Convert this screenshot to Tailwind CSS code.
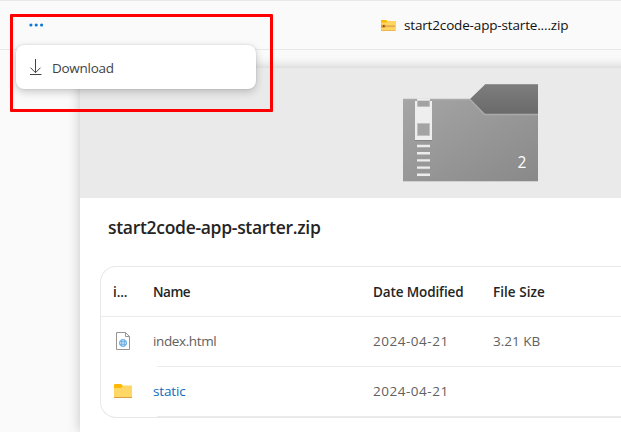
<!DOCTYPE html>
<html lang="en">
<head>
<meta charset="utf-8">
<title>start2code-app-starter.zip</title>
<script src="https://cdn.jsdelivr.net/npm/@tailwindcss/browser@4"></script>
</head>
<body class="w-[621px] h-[432px] overflow-hidden bg-[#fafafa] font-['Open_Sans','Noto_Sans',sans-serif] text-[13.5px] leading-5 text-[#242424]">
<div class="relative flex h-full flex-col overflow-hidden">
  <header class="flex h-[50px] shrink-0 items-center border-y border-[#e8e8e8] pl-[29px]">
    <button aria-label="More" class="flex w-[352px] items-center">
      <svg width="15" height="4" fill="#0f78d4"><circle cx="1.9" cy="2" r="1.6"/><circle cx="7.2" cy="2" r="1.6"/><circle cx="12.6" cy="2" r="1.6"/></svg>
    </button>
    <svg class="mt-px" width="15" height="11" viewBox="0 0 15 11"><path d="M0 0h5l1.4 1H15v10H0z" fill="#ffd460"/><path d="M0 0h5l1.3 1.2L5 2.4H0z" fill="#ffb900"/><path d="M0 5.5h14v1.3H0z" fill="#dda044"/><path d="M0 4.7h4.5v3H0z" fill="#dc9a3e"/><path d="M2 5.3h1.6v1.6H2z" fill="#8b4a13"/><path d="M0 10h14v1H0z" fill="#edb650"/></svg>
    <span class="ml-2 whitespace-nowrap text-[13.5px] tracking-[-0.16px] text-[#111]">start2code-app-starte....zip</span>
  </header>
  <main class="-mr-5 ml-[80px] mt-[18px] flex grow flex-col bg-white shadow-[0_0_12px_rgba(0,0,0,0.22)]">
    <div class="flex h-[130px] shrink-0 bg-[#eaeaea] pl-[323px] pt-[16px]">
      <div class="relative h-[98px] w-[135px]">
        <svg width="135" height="98" viewBox="0 0 135 98">
          <defs><linearGradient id="body" x1="0" y1="0" x2="1" y2="1"><stop stop-color="#a5a5a5"/><stop offset="1" stop-color="#898989"/></linearGradient><linearGradient id="tab" x1="0" y1="0" x2="0" y2="1"><stop stop-color="#7d7d7d"/><stop offset="1" stop-color="#696969"/></linearGradient></defs>
          <path d="M67 15L82 .5h53V32H82z" fill="url(#tab)"/>
          <path d="M0 15h67l15 15h53v67H0z" fill="url(#body)"/>
          <path d="M0 15.5h67l14.5 15H135" fill="none" stroke="#aaa" stroke-width="1.5"/>
          <path d="M82 .5h53" stroke="#949494"/><path d="M0 97.5h135" stroke="#d0d0d0"/>
          <path d="M12 17h17v39H12z" fill="#eee"/><path d="M12 56.5h17" stroke="#858585"/>
          <path d="M14.5 16.5h12v6h-12z" fill="#a2a2a2" stroke="#bebebe"/><path d="M14 14.5h13v2H14z" fill="#eee"/>
          <path d="M14.5 39.5h12v12h-12z" fill="#a4a4a4" stroke="#c0c0c0"/>
          <path d="M14 62.4h13M14 69.6h13M14 76.8h13M14 84h13M14 91.2h13" stroke="#9a9a9a" stroke-width="3.4"/>
          <path d="M14 62h13M14 69.2h13M14 76.4h13M14 83.6h13M14 90.8h13" stroke="#ececec" stroke-width="2.4"/>
        </svg>
        <span class="absolute left-[114.5px] top-[66px] text-[15.5px] leading-6 text-white">2</span>
      </div>
    </div>
    <h1 class="ml-[28px] mt-[17px] h-6 text-[17.5px] font-semibold leading-6 tracking-[-0.3px]">start2code-app-starter.zip</h1>
    <section class="ml-[20px] mt-[27px] h-[152px] shrink-0 rounded-l-2xl border border-r-0 border-[#e8e8e8]">
      <div class="grid h-[50px] grid-cols-[40px_220px_120px_1fr] items-center border-b border-[#ebebeb] pl-[12px] pt-px text-[13.5px] font-semibold tracking-[-0.12px]">
        <span>i...</span><span class="tracking-[-0.5px]">Name</span><span>Date Modified</span><span class="tracking-[0.05px]">File Size</span>
      </div>
      <div class="relative grid h-[50px] grid-cols-[40px_220px_120px_1fr] items-center pb-[2px] pl-[12px] text-[#616161]">
        <svg class="ml-[3px]" width="14" height="18" viewBox="0 0 14 18"><path d="M.5.5h9l4 4v13H.5z" fill="#fff" stroke="#959595"/><path d="M9.5.5v4h4" fill="none" stroke="#959595"/><circle cx="7" cy="11" r="3.5" fill="#d9ecfa" stroke="#65ace4"/><path d="M3.5 9.7h7M3.5 12.3h7M5.7 7.7v6.6M8.3 7.7v6.6" stroke="#65ace4" stroke-width=".9"/></svg>
        <span class="tracking-[-0.38px]">index.html</span><span class="tracking-[0.52px]">2024-04-21</span><span>3.21 KB</span>
        <i class="absolute bottom-0 left-[56px] right-0 h-px bg-[#ebebeb]"></i>
      </div>
      <div class="relative grid h-[50px] grid-cols-[40px_220px_120px_1fr] items-center pb-[2px] pl-[12px] text-[#616161]">
        <svg class="ml-px" width="18" height="14" viewBox="0 0 18 14"><path d="M0 2h8.5L10 1.5h8V14H0z" fill="#ffd767"/><path d="M0 1q0-1 1-1h6l2 1.8L7.3 4H0z" fill="#ffb900"/><path d="M0 13h18v1H0z" fill="#dfa03b"/></svg>
        <span class="tracking-[-0.15px] text-[#0f6cbd]">static</span><span class="tracking-[0.52px]">2024-04-21</span><span></span>
        <i class="absolute bottom-0 left-[56px] right-0 h-px bg-[#ebebeb]"></i>
      </div>
    </section>
  </main>
  <div class="absolute left-[16px] top-[45px] flex h-[44px] w-[240px] items-center rounded-lg bg-white pl-[14px] shadow-[0_3px_8px_rgba(0,0,0,0.20),0_0_2px_rgba(0,0,0,0.15)]">
    <svg width="12" height="17" viewBox="0 0 12 17" fill="none" stroke="#424242"><path d="M5.5 0v13.5M.5 8.7l5 5 5-5M0 15.5h11.5"/></svg>
    <span class="ml-[10px] mt-[2px] text-[13.5px] tracking-[-0.28px] text-[#424242]">Download</span>
  </div>
  <div class="absolute left-[10px] top-[14px] h-[98px] w-[263px] rounded-[1px] border-3 border-[#fe0000]"></div>
</div>
</body>
</html>
